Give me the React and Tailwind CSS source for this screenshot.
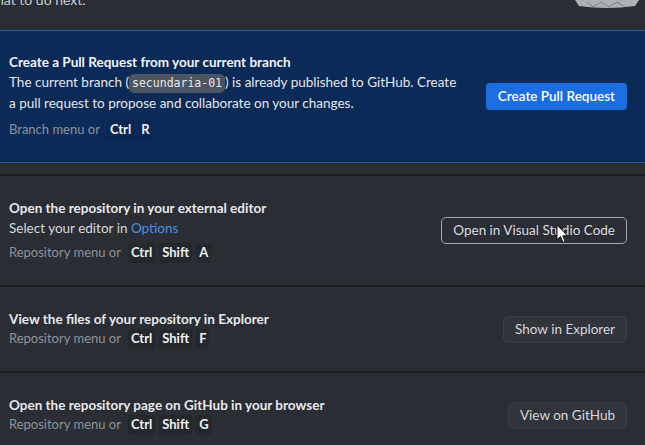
import React from "react";

function Key({ children, blue }) {
  return (
    <span
      className={`inline-flex items-center h-[20px] px-[3px] rounded-[3px] font-bold text-[#eef0f2] ${
        blue ? "bg-[#0a2651]" : "bg-[#24272c]"
      }`}
    >
      {children}
    </span>
  );
}

function Shortcut({ label, keys, blue }) {
  return (
    <div className="flex items-center gap-[4px] text-[13px] text-[#8d939b]">
      <span className="mr-[3px]">{label}</span>
      {keys.map((k) => (
        <Key key={k} blue={blue}>
          {k}
        </Key>
      ))}
    </div>
  );
}

function Row({ title, children, button, h }) {
  return (
    <div
      className={`flex items-center justify-between pl-[9px] pr-[18px] border-t-2 border-[#1c1e22] ${h}`}
    >
      <div className="flex flex-col">{title}{children}</div>
      {button}
    </div>
  );
}

export default function App() {
  return (
    <div
      className="relative w-[645px] h-[445px] overflow-hidden bg-[#2a2d33] text-[#d6d9dd]"
      style={{ fontFamily: "Lato, 'Open Sans', sans-serif" }}
    >
      {/* top fragment */}
      <div className="h-[30px] relative">
        <div className="absolute left-[-4px] top-[-11px] text-[14px] text-[#c9ccd0]">
          hat to do next.
        </div>
        <svg className="absolute right-[4px] top-0" width="68" height="9" viewBox="0 0 68 9">
          <path d="M2 0 L6 6 Q34 10 62 6 L66 0 Z" fill="#c7c9cc" opacity="0.85" />
          <path d="M14 2 L20 7 L28 2 L36 7 L44 2 L52 7" stroke="#7a7e84" strokeWidth="1" fill="none" />
        </svg>
      </div>

      {/* blue callout */}
      <div className="h-[133px] bg-[#0b2a57] border-t border-b border-[#2d5a98] flex items-center justify-between pl-[9px] pr-[18px]">
        <div className="flex flex-col">
          <div className="text-[13.5px] font-bold text-[#f1f3f5] leading-[19px]">
            Create a Pull Request from your current branch
          </div>
          <div className="text-[13.5px] leading-[21px] text-[#e3e6ea]">
            The current branch (
            <span
              className="inline-block px-[3px] rounded-[5px] bg-[#4d5562] text-[#e8e8e8] text-[11.5px] leading-[19px]"
              style={{ fontFamily: "'DejaVu Sans Mono', monospace" }}
            >
              secundaria-01
            </span>
            ) is already published to GitHub. Create
            <br />a pull request to propose and collaborate on your changes.
          </div>
          <div className="mt-[6px]">
            <Shortcut label="Branch menu or" keys={["Ctrl", "R"]} blue />
          </div>
        </div>
        <button className="h-[27px] px-[12px] rounded-[4px] bg-[#1a6ee0] text-white text-[13.5px] font-semibold">
          Create Pull Request
        </button>
      </div>

      <div className="h-[11px]" />

      <Row
        h="h-[111px]"
        title={
          <div className="text-[13.5px] font-bold text-[#e6e8eb] leading-[19px]">
            Open the repository in your external editor
          </div>
        }
        button={
          <button className="relative h-[27px] px-[11px] rounded-[5px] border border-[#a4a8ae] text-[13.5px] text-[#d9dcdf]">
            Open in Visual Studio Code
          </button>
        }
      >
        <div className="text-[13.5px] leading-[20px] text-[#d6d9dd]">
          Select your editor in <span className="text-[#4a8fe3]">Options</span>
        </div>
        <div className="mt-[5px]">
          <Shortcut label="Repository menu or" keys={["Ctrl", "Shift", "A"]} />
        </div>
      </Row>

      <Row
        h="h-[86px]"
        title={
          <div className="text-[13.5px] font-bold text-[#e6e8eb] leading-[20px]">
            View the files of your repository in Explorer
          </div>
        }
        button={
          <button className="h-[27px] px-[11px] rounded-[5px] bg-[#31343b] border border-[#3a3d44] text-[13.5px] text-[#d4d7db]">
            Show in Explorer
          </button>
        }
      >
        <Shortcut label="Repository menu or" keys={["Ctrl", "Shift", "F"]} />
      </Row>

      <Row
        h="h-[86px]"
        title={
          <div className="text-[13.5px] font-bold text-[#e6e8eb] leading-[20px]">
            Open the repository page on GitHub in your browser
          </div>
        }
        button={
          <button className="h-[27px] px-[11px] rounded-[5px] bg-[#31343b] border border-[#3a3d44] text-[13.5px] text-[#d4d7db]">
            View on GitHub
          </button>
        }
      >
        <Shortcut label="Repository menu or" keys={["Ctrl", "Shift", "G"]} />
      </Row>

      {/* mouse cursor */}
      <svg className="absolute left-[556px] top-[224px]" width="13" height="20" viewBox="0 0 13 20">
        <path
          d="M1 1 L1 16 L4.5 12.5 L7 18.5 L9.2 17.6 L6.8 11.8 L11.5 11.8 Z"
          fill="#ffffff"
          stroke="#111"
          strokeWidth="1"
          strokeLinejoin="round"
        />
      </svg>
    </div>
  );
}
